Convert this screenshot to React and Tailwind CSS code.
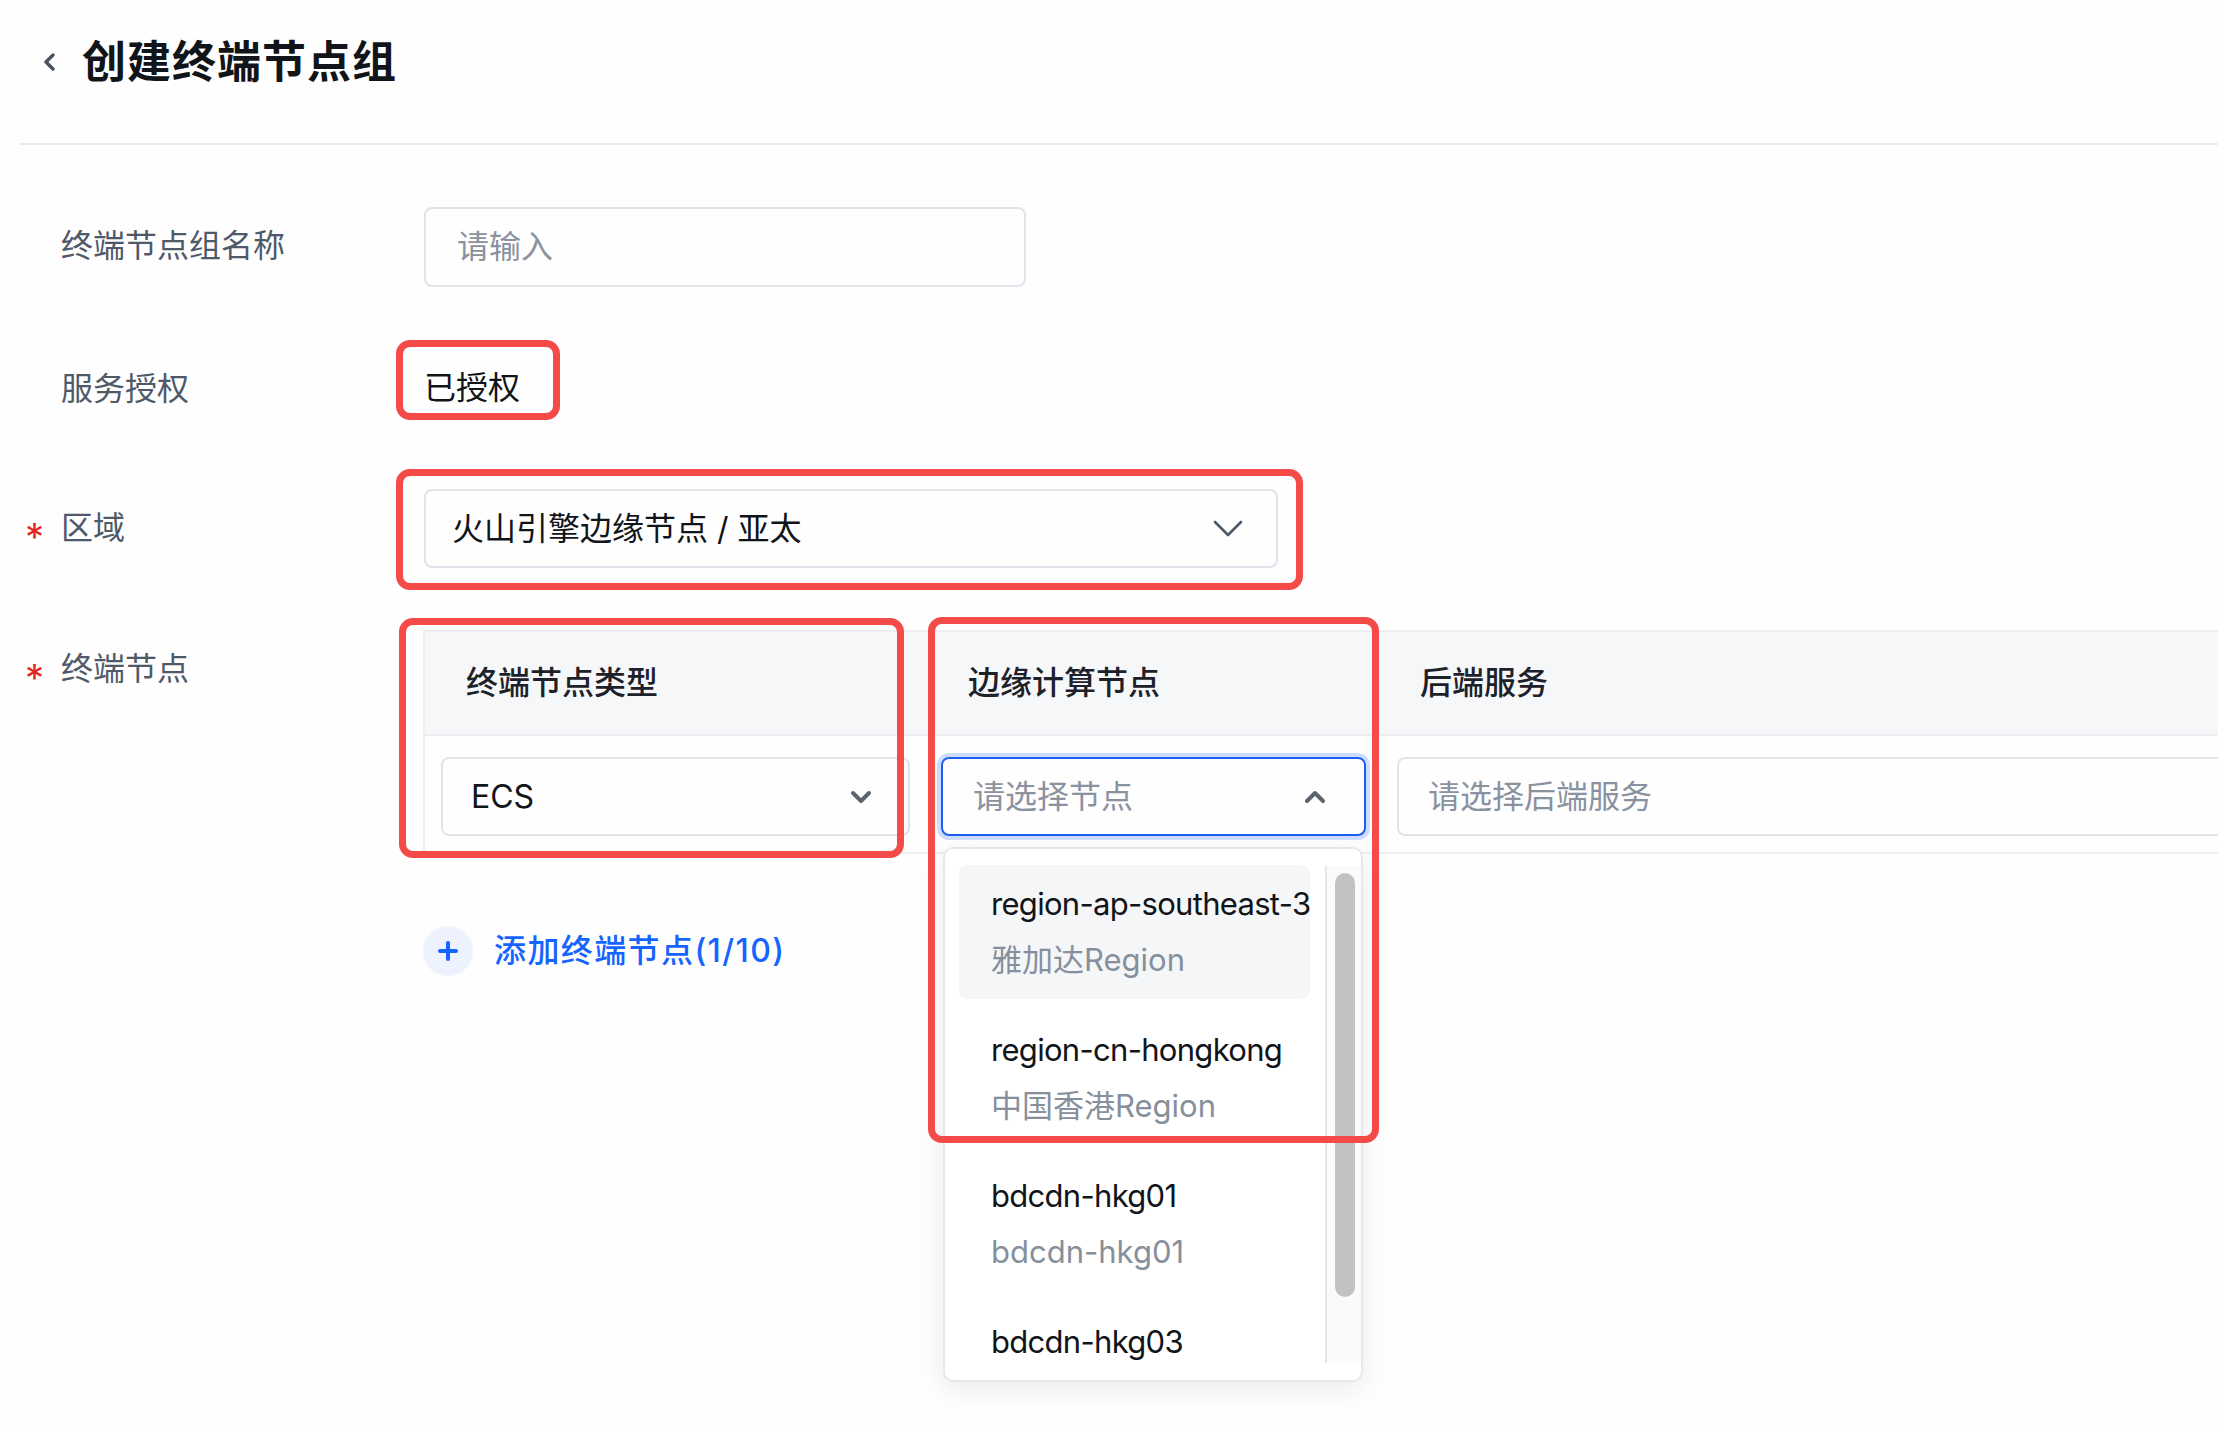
import React from 'react';

const options = [
  { name: 'region-ap-southeast-3', desc: '雅加达Region', active: true },
  { name: 'region-cn-hongkong', desc: '中国香港Region' },
  { name: 'bdcdn-hkg01', desc: 'bdcdn-hkg01' },
  { name: 'bdcdn-hkg03' },
];

const Label = ({ text, required, pt }) => (
  <div className={`w-[396px] shrink-0 flex items-start ${required ? 'pl-[25px]' : 'pl-[61px]'} ${pt}`}>
    {required && (
      <span className="w-[36px] text-[38px] leading-[42px] text-[#e3261f] translate-y-[9px]">*</span>
    )}
    <span className="text-[32px] leading-[42px] text-[#4e5969]">{text}</span>
  </div>
);

const ChevronDown = () => (
  <svg width="30" height="18" viewBox="0 0 30 18">
    <path d="M2 2 L15 15 L28 2" fill="none" stroke="#4e5969" strokeWidth="2.6" strokeLinecap="round" strokeLinejoin="round" />
  </svg>
);

const ChevronBold = ({ up }) => (
  <svg width="22" height="14" viewBox="0 0 22 14">
    <path
      d={up ? 'M3 11 L11 3 L19 11' : 'M3 3 L11 11 L19 3'}
      fill="none" stroke="#5c6470" strokeWidth="4" strokeLinecap="round" strokeLinejoin="round"
    />
  </svg>
);

export default function App() {
  return (
    <div className="w-[2218px] h-[1432px] overflow-hidden bg-[#fefefe] font-['Inter','Noto_Sans_CJK_SC',sans-serif] text-[#1d2129]">
      {/* Header */}
      <div className="ml-[20px] h-[145px] border-b-2 border-[#e9ebef] pl-[22px] pt-[37px]">
        <div className="flex items-center h-[50px] gap-[26px]">
          <svg width="14" height="18" viewBox="0 0 14 18">
            <path d="M11 2 L4 9 L11 16" fill="none" stroke="#4a5160" strokeWidth="3.4" strokeLinecap="round" strokeLinejoin="round" />
          </svg>
          <h1 className="text-[44px] leading-[50px] font-semibold tracking-[1px] text-[#111418]">创建终端节点组</h1>
        </div>
      </div>

      {/* Form */}
      <div className="pt-[62px]">
        {/* 名称 */}
        <div className="flex items-start">
          <Label text="终端节点组名称" pt="pt-[18px]" />
          <div className="ml-[28px] w-[602px] h-[80px] rounded-[8px] border-2 border-[#dfe3ea] flex items-center pl-[31px] text-[32px] text-[#8a919f]">
            请输入
          </div>
        </div>

        {/* 服务授权 */}
        <div className="flex items-start mt-[53px]">
          <Label text="服务授权" pt="pt-[28px]" />
          <div className="w-[164px] h-[80px] border-[7px] border-[#f44a48] rounded-[14px] pl-[21px] pb-[4px] flex items-end">
            <span className="text-[32px] leading-[42px] text-[#111418]">已授权</span>
          </div>
        </div>

        {/* 区域 */}
        <div className="flex items-start mt-[49px]">
          <Label text="区域" required pt="pt-[38px]" />
          <div className="w-[907px] h-[121px] border-[7px] border-[#f44a48] rounded-[14px] pl-[21px] pt-[13px]">
            <div className="w-[854px] h-[79px] rounded-[8px] border-2 border-[#dfe3ea] flex items-center justify-between pl-[26px] pr-[33px]">
              <span className="text-[32px] text-[#111418]">火山引擎边缘节点 / 亚太</span>
              <ChevronDown />
            </div>
          </div>
        </div>

        {/* 终端节点 */}
        <div className="flex items-start mt-[40px]">
          <Label text="终端节点" required pt="pt-[18px]" />
          <div className="ml-[27px] flex-1 relative">
            <div className="border-t-2 border-l-2 border-[#eceef2]">
              <div className="h-[104px] bg-[#f6f7f9] border-b-2 border-[#eceef2] flex text-[32px] font-medium text-[#1d2129]">
                <div className="w-[500px] pl-[41px] flex items-center">终端节点类型</div>
                <div className="w-[454px] pl-[43px] flex items-center">边缘计算节点</div>
                <div className="flex-1 pl-[41px] flex items-center">后端服务</div>
              </div>
              <div className="h-[118px] border-b-2 border-[#eceef2] flex pt-[21px]">
                <div className="w-[500px] pl-[16px] pr-[15px]">
                  <div className="h-[79px] rounded-[8px] border-2 border-[#dfe3ea] flex items-center justify-between pl-[28px] pr-[36px]">
                    <span className="text-[32px] text-[#111418]">ECS</span>
                    <ChevronBold />
                  </div>
                </div>
                <div className="w-[454px] pl-[16px] pr-[13px]">
                  <div className="h-[79px] rounded-[8px] border-2 border-[#1c5ef0] ring-[4px] ring-[#cddcff] flex items-center justify-between pl-[30px] pr-[38px]">
                    <span className="text-[32px] text-[#8a919f]">请选择节点</span>
                    <ChevronBold up />
                  </div>
                </div>
                <div className="flex-1 pl-[18px]">
                  <div className="h-[79px] rounded-l-[8px] border-2 border-r-0 border-[#dfe3ea] flex items-center pl-[29px]">
                    <span className="text-[32px] text-[#8a919f]">请选择后端服务</span>
                  </div>
                </div>
              </div>
            </div>

            {/* 添加 */}
            <div className="mt-[72px] flex items-center gap-[21px]">
              <div className="w-[50px] h-[50px] rounded-full bg-[#edf2fe] flex items-center justify-center">
                <svg width="20" height="20" viewBox="0 0 20 20">
                  <path d="M10 2 V18 M2 10 H18" stroke="#1664ff" strokeWidth="4" strokeLinecap="round" />
                </svg>
              </div>
              <span className="text-[32px] font-medium tracking-[1.4px] text-[#1664ff]">添加终端节点(1/10)</span>
            </div>

            {/* 下拉 */}
            <div className="absolute left-[520px] top-[217px] w-[420px] h-[535px] bg-white border-2 border-[#e6e8ec] rounded-[10px] shadow-[0_8px_28px_rgba(0,0,0,0.08)] flex overflow-hidden">
              <div className="flex-1 min-w-0 pl-[14px] pr-[15px] pt-[16px] flex flex-col gap-[12px] overflow-hidden">
                {options.map((o) => (
                  <div key={o.name} className={`shrink-0 rounded-[8px] pl-[32px] py-[11px] ${o.active ? 'bg-[#f5f6f8]' : ''}`}>
                    <div className="text-[31px] leading-[56px] tracking-[-0.7px] text-[#111418] whitespace-nowrap">{o.name}</div>
                    {o.desc && (
                      <div className="text-[31px] leading-[56px] text-[#86909c] whitespace-nowrap">{o.desc}</div>
                    )}
                  </div>
                ))}
              </div>
              <div className="w-[36px] shrink-0 my-[17px] border-l-2 border-[#e8e8e8] bg-[#fafafa] pt-[7px] pl-[8px]">
                <div className="w-[20px] h-[424px] rounded-full bg-[#c2c2c2]" />
              </div>
            </div>

            {/* 标注框 */}
            <div className="absolute left-[-24px] top-[-12px] w-[505px] h-[240px] border-[7px] border-[#f44a48] rounded-[14px]" />
            <div className="absolute left-[505px] top-[-13px] w-[451px] h-[526px] border-[7px] border-[#f44a48] rounded-[14px]" />
          </div>
        </div>
      </div>
    </div>
  );
}
